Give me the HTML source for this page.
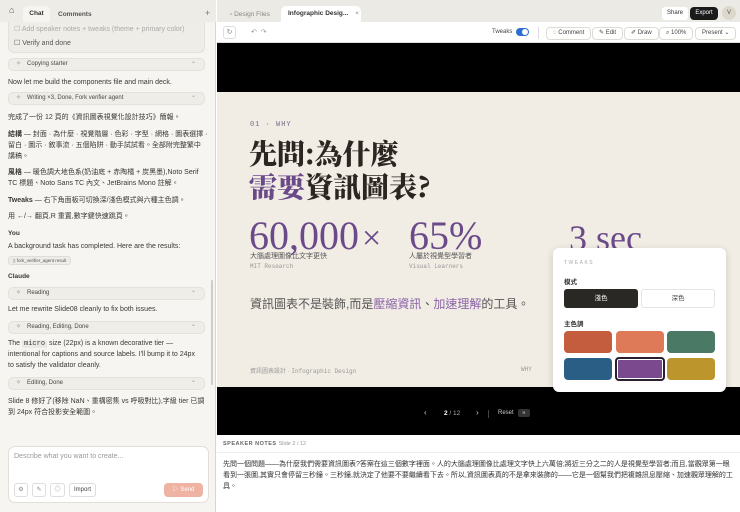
<!DOCTYPE html>
<html><head><meta charset="utf-8"><style>
*{box-sizing:border-box;margin:0;padding:0}
body{width:740px;height:512px;overflow:hidden;font-family:"Liberation Sans","Noto Sans CJK TC",sans-serif;background:#fff;position:relative;color:#2a2825}
.abs{position:absolute}
#left{left:0;top:0;width:216px;height:512px;background:#f6f5f1;border-right:1px solid #d8d5ce}
.t{position:absolute;left:8px;font-size:7px;color:#3a3835;white-space:nowrap}
.pill{position:absolute;left:8px;width:197px;height:13px;border:1px solid #e4e1da;background:#efede7;border-radius:5px;font-size:6px;color:#4a4743;padding-left:18px;line-height:11px}
.pill:before{content:"✧";position:absolute;left:7px;color:#8a8680}
.pill:after{content:"⌄";position:absolute;right:8px;top:-2px;color:#9a968f}
.btn{position:absolute;top:27px;height:13px;border:1px solid #dedbd5;border-radius:4px;font-size:6px;line-height:11px;padding:0 6px;color:#444;background:#fff}
.sw{position:absolute;width:48px;height:22px;border-radius:4px}
.ser{font-family:"Noto Serif CJK SC","Liberation Serif",serif}
.mono{font-family:"Liberation Mono",monospace}
</style></head><body>
<div id="left" class="abs">
 <div class="abs" style="left:0;top:0;width:216px;height:22px;background:#eeece6"></div>
 <div class="abs" style="left:9px;top:5px;font-size:9px;color:#555">⌂</div>
 <div class="abs" style="left:23px;top:6px;width:27px;height:16px;background:#f6f5f1;border-radius:5px 5px 0 0;font-size:6.5px;text-align:center;line-height:16px;font-weight:bold;color:#333">Chat</div>
 <div class="abs" style="left:58px;top:11px;font-size:6.5px;color:#555;font-weight:bold">Comments</div>
 <div class="abs" style="left:205px;top:8px;font-size:9px;color:#777">+</div>
 <div class="abs" style="left:8px;top:22px;width:197px;height:31px;background:#efede7;border:1px solid #e4e1da;border-top:none;border-radius:0 0 6px 6px"></div>
 <div class="t" style="left:14px;top:25px;color:#aaa">☐ Add speaker notes + tweaks (theme + primary color)</div>
 <div class="t" style="left:14px;top:39px;color:#555">☐ Verify and done</div>
 <div class="pill" style="top:58px">Copying starter</div>
 <div class="t" style="top:79px">Now let me build the components file and main deck.</div>
 <div class="pill" style="top:92px">Writing ×3, Done, Fork verifier agent</div>
 <div class="t" style="top:112px">完成了一份 12 頁的《資訊圖表視覺化設計技巧》簡報。</div>
 <div class="t" style="top:129px"><b>結構</b> — 封面 · 為什麼 · 視覺階層 · 色彩 · 字型 · 網格 · 圖表選擇 ·</div>
 <div class="t" style="top:140px">留白 · 圖示 · 敘事流 · 五個陷阱 · 動手試試看。全部附完整繁中</div>
 <div class="t" style="top:151px">講稿。</div>
 <div class="t" style="top:167px"><b>風格</b> — 暖色調大地色系(奶油底 + 赤陶橘 + 炭黑墨),Noto Serif</div>
 <div class="t" style="top:178px">TC 標題、Noto Sans TC 內文、JetBrains Mono 註解。</div>
 <div class="t" style="top:195px"><b>Tweaks</b> — 右下角面板可切換深/淺色模式與六種主色調。</div>
 <div class="t" style="top:211px">用 ←/→ 翻頁,R 重置,數字鍵快速跳頁。</div>
 <div class="t" style="top:230px;font-weight:bold;font-size:6.5px">You</div>
 <div class="t" style="top:243px">A background task has completed. Here are the results:</div>
 <div class="abs" style="left:8px;top:256px;height:9px;padding:0 4px;border:1px solid #ddd;border-radius:3px;background:#eeece6;font-size:4.5px;line-height:8px;color:#555">▯ fork_verifier_agent result</div>
 <div class="t" style="top:273px;font-weight:bold;font-size:6.5px">Claude</div>
 <div class="pill" style="top:287px">Reading</div>
 <div class="t" style="top:306px">Let me rewrite Slide08 cleanly to fix both issues.</div>
 <div class="pill" style="top:321px">Reading, Editing, Done</div>
 <div class="t" style="top:340px">The <span class="mono" style="background:#ebe9e3;padding:0 2px">micro</span> size (22px) is a known decorative tier —</div>
 <div class="t" style="top:351px">intentional for captions and source labels. I'll bump it to 24px</div>
 <div class="t" style="top:362px">to satisfy the validator cleanly.</div>
 <div class="pill" style="top:377px">Editing, Done</div>
 <div class="t" style="top:396px">Slide 8 修好了(移除 NaN、重構密集 vs 呼吸對比),字級 tier 已調</div>
 <div class="t" style="top:407px">到 24px 符合投影安全範圍。</div>
 <div class="abs" style="left:211px;top:280px;width:2px;height:105px;background:#d0cdc6;border-radius:1px"></div>
 <div class="abs" style="left:8px;top:446px;width:201px;height:57px;background:#fff;border:1px solid #e2dfd8;border-radius:7px"></div>
 <div class="t" style="left:14px;top:453px;color:#999">Describe what you want to create...</div>
 <div class="abs" style="left:14px;top:483px;width:14px;height:14px;border:1px solid #ddd;border-radius:3px;font-size:6px;text-align:center;line-height:12px;color:#888">⚙</div>
 <div class="abs" style="left:32px;top:483px;width:14px;height:14px;border:1px solid #ddd;border-radius:3px;font-size:6px;text-align:center;line-height:12px;color:#888">✎</div>
 <div class="abs" style="left:50px;top:483px;width:15px;height:14px;border:1px solid #ddd;border-radius:3px;font-size:6px;text-align:center;line-height:12px;color:#aaa">◎</div>
 <div class="abs" style="left:69px;top:483px;width:27px;height:14px;border:1px solid #ddd;border-radius:3px;font-size:6px;text-align:center;line-height:12px;color:#444">Import</div>
 <div class="abs" style="left:164px;top:483px;width:39px;height:14px;background:#eeb3a3;border-radius:4px;font-size:6px;text-align:center;line-height:14px;color:#fff">▷ Send</div>
</div>

<div class="abs" style="left:217px;top:0;width:523px;height:22px;background:#eceae4"></div>
<div class="abs" style="left:230px;top:11px;font-size:6.5px;color:#888">▫ Design Files</div>
<div class="abs" style="left:281px;top:6px;width:80px;height:16px;background:#fff;border-radius:5px 5px 0 0;font-size:6.5px;line-height:16px;padding-left:7px;font-weight:bold;color:#333">Infographic Desig... <span style="font-weight:normal;color:#888;margin-left:5px">×</span></div>
<div class="abs" style="left:662px;top:7px;width:26px;height:13px;background:#fff;border-radius:3px;font-size:6px;text-align:center;line-height:13px;color:#333">Share</div>
<div class="abs" style="left:690px;top:7px;width:28px;height:13px;background:#1a1a1a;border-radius:4px;font-size:6px;text-align:center;line-height:13px;color:#fff">Export</div>
<div class="abs" style="left:722px;top:6px;width:14px;height:14px;background:#ddd8cc;border-radius:50%;font-size:6px;text-align:center;line-height:14px;color:#555">V</div>
<div class="abs" style="left:217px;top:22px;width:523px;height:21px;background:#fff;border-bottom:1px solid #ddd"></div>
<div class="abs" style="left:223px;top:26px;width:13px;height:13px;border:1px solid #ddd;border-radius:3px;font-size:7px;text-align:center;line-height:11px;color:#888">↻</div>
<div class="abs" style="left:251px;top:28px;font-size:7px;color:#999">↶ &nbsp;↷</div>
<div class="abs" style="left:492px;top:29px;font-size:6px;color:#444">Tweaks</div>
<div class="abs" style="left:516px;top:28px;width:13px;height:8px;background:#2d6fd0;border-radius:4px"><div style="position:absolute;right:1px;top:1px;width:6px;height:6px;border-radius:50%;background:#fff"></div></div>
<div class="abs" style="left:538px;top:27px;width:1px;height:12px;background:#ddd"></div>
<div class="btn" style="left:546px">◌ Comment</div>
<div class="btn" style="left:592px">✎ Edit</div>
<div class="btn" style="left:624px">✐ Draw</div>
<div class="btn" style="left:659px">⌕ 100%</div>
<div class="btn" style="left:695px">Present ⌄</div>
<div class="abs" style="left:217px;top:43px;width:523px;height:392px;background:#000"></div>
<div class="abs" style="left:217px;top:92px;width:523px;height:295px;background:#f1ece4"></div>
<div class="abs mono" style="left:250px;top:121px;font-size:7px;color:#7a6a8c;letter-spacing:1px">01 · WHY</div>
<div class="abs ser" style="left:249px;top:137px;font-size:28px;font-weight:900;line-height:33px;color:#2b2622">先問:為什麼<br><span style="color:#6b4a8a">需要</span>資訊圖表?</div>
<div class="abs" style="left:249px;top:214px;font-family:'Liberation Serif',serif;font-size:40px;color:#6b4a8a;line-height:44px">60,000<span style="font-weight:100;font-size:34px;margin-left:3px">×</span></div>
<div class="abs" style="left:409px;top:214px;font-family:'Liberation Serif',serif;font-size:40px;color:#6b4a8a;line-height:44px">65%</div>
<div class="abs" style="left:569px;top:216px;font-family:'Liberation Serif',serif;font-size:36px;color:#6b4a8a;line-height:44px">3 sec</div>
<div class="abs" style="left:250px;top:251px;font-size:7px;color:#555">大腦處理圖像比文字更快</div>
<div class="abs mono" style="left:250px;top:263px;font-size:6px;color:#999">MIT Research</div>
<div class="abs" style="left:409px;top:251px;font-size:7px;color:#555">人屬於視覺型學習者</div>
<div class="abs mono" style="left:409px;top:263px;font-size:6px;color:#999">Visual Learners</div>
<div class="abs" style="left:250px;top:295px;font-size:12px;color:#555">資訊圖表不是裝飾,而是<span style="color:#8a64a8">壓縮資訊</span>、<span style="color:#8a64a8">加速理解</span>的工具。</div>
<div class="abs" style="left:250px;top:366px;font-size:6px;color:#999">資訊圖表設計 · <span class="mono">Infographic Design</span></div>
<div class="abs mono" style="left:521px;top:366px;font-size:6px;color:#999">WHY</div>
<div class="abs" style="left:553px;top:248px;width:173px;height:144px;background:#fff;border-radius:6px;box-shadow:0 2px 8px rgba(0,0,0,.15)"></div>
<div class="abs" style="left:564px;top:260px;font-size:5px;color:#aaa;letter-spacing:1.5px">TWEAKS</div>
<div class="abs" style="left:564px;top:276px;font-size:6.5px;font-weight:bold;color:#333">模式</div>
<div class="abs" style="left:564px;top:289px;width:74px;height:19px;background:#2a2825;border-radius:3px;font-size:6.5px;color:#fff;text-align:center;line-height:19px">淺色</div>
<div class="abs" style="left:641px;top:289px;width:74px;height:19px;border:1px solid #e4e4e4;border-radius:3px;font-size:6.5px;color:#444;text-align:center;line-height:17px">深色</div>
<div class="abs" style="left:564px;top:318px;font-size:6.5px;font-weight:bold;color:#333">主色調</div>
<div class="sw" style="left:564px;top:331px;background:#c45c3e"></div>
<div class="sw" style="left:616px;top:331px;background:#df7a58"></div>
<div class="sw" style="left:667px;top:331px;background:#4a7966"></div>
<div class="sw" style="left:564px;top:358px;background:#2a5e85"></div>
<div class="sw" style="left:615px;top:357px;width:50px;height:24px;background:#7b4a8e;border:2px solid #2a2030;box-shadow:inset 0 0 0 1px #fff"></div>
<div class="sw" style="left:667px;top:358px;background:#bc962c"></div>
<div class="abs" style="left:424px;top:408px;font-size:8px;color:#ccc">‹</div>
<div class="abs" style="left:444px;top:410px;font-size:6.5px;color:#aaa"><b style="color:#fff">2</b> / 12</div>
<div class="abs" style="left:476px;top:408px;font-size:8px;color:#ccc">›</div>
<div class="abs" style="left:488px;top:410px;width:1px;height:8px;background:#444"></div>
<div class="abs" style="left:498px;top:410px;font-size:6px;color:#ccc">Reset</div>
<div class="abs" style="left:518px;top:409px;width:12px;height:8px;background:#333;border-radius:2px;font-size:4px;color:#ddd;text-align:center;line-height:8px">R</div>
<div class="abs" style="left:223px;top:441px;font-size:5.5px;color:#666;letter-spacing:.5px;font-weight:bold">SPEAKER NOTES <span style="font-weight:normal;color:#999;letter-spacing:0">Slide 2 / 12</span></div>
<div class="abs" style="left:217px;top:452px;width:523px;height:1px;background:#eee"></div>
<div class="abs" style="left:223px;top:459px;width:512px;font-size:7px;line-height:11px;color:#333">先問一個問題——為什麼我們需要資訊圖表?答案在這三個數字裡面。人的大腦處理圖像比處理文字快上六萬倍;將近三分之二的人是視覺型學習者;而且,當觀眾第一眼看到一張圖,其實只會停留三秒鐘。三秒鐘,就決定了他要不要繼續看下去。所以,資訊圖表真的不是拿來裝飾的——它是一個幫我們把複雜訊息壓縮、加速觀眾理解的工具。</div>
</body></html>
